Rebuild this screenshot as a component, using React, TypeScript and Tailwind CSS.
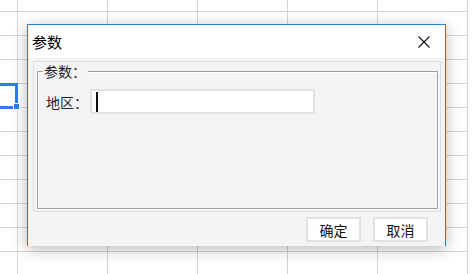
import React from 'react'

const ROWS = 12
const COLS = 6

function SheetGrid() {
  return (
    <div className="flex flex-col">
      {Array.from({ length: ROWS }).map((_, r) => (
        <div key={r} className={r === 0 ? 'flex h-[12px]' : 'flex h-[24px]'}>
          {Array.from({ length: COLS }).map((_, c) => (
            <div
              key={c}
              className={
                (c === 0 ? 'w-[18px] ' : 'w-[90px] ') +
                'shrink-0 border-r border-b border-[#d4d4d4]'
              }
            />
          ))}
        </div>
      ))}
    </div>
  )
}

export default function App() {
  return (
    <div
      className="relative w-[476px] h-[274px] overflow-hidden bg-white"
      style={{ fontFamily: '"Noto Sans CJK SC", "Noto Sans", sans-serif' }}
    >
      <SheetGrid />

      {/* selected cell */}
      <div className="absolute left-[-4px] top-[83px] w-[22px] h-[26px] border-[3px] border-[#2b7de9]" />
      <div className="absolute left-[13px] top-[103px] w-[7px] h-[7px] bg-[#2b7de9] border border-white" />

      {/* dialog */}
      <div className="absolute left-[27px] top-[24px] w-[419px] h-[222px] flex flex-col border-t border-l border-r border-[#1883d7] bg-[#f4f4f6] shadow-[0_3px_14px_rgba(0,0,0,0.28)]">
        <div className="h-[33px] bg-white flex items-center justify-between pl-[4px] pr-[15px]">
          <span className="text-[15px] leading-none text-black">参数</span>
          <svg width="12" height="12" viewBox="0 0 12 12" className="mt-[1px]">
            <path d="M0.5 0.5 L11.5 11.5 M11.5 0.5 L0.5 11.5" stroke="#111" strokeWidth="1.1" fill="none" />
          </svg>
        </div>

        <div className="flex-1 flex flex-col pl-[5px] pr-[4px] pt-[3px]">
          <div className="h-[151px] border border-[#dcdcde] pl-[3px] pr-[2px] pt-[9px] pb-[2px]">
            <div className="relative h-full border border-[#a29e94] shadow-[1px_1px_0_#fff,inset_1px_1px_0_#fff]">
              <span className="absolute left-[5px] top-[-10px] bg-[#f4f4f6] pl-[1px] pr-[2px] text-[14px] leading-[18px] text-[#222]">
                参数：
              </span>
              <div className="flex items-center pl-[8px] pt-[17px]">
                <span className="w-[44px] text-[14px] leading-none text-[#222]">地区：</span>
                <div className="w-[225px] h-[25px] bg-white border-2 border-[#e2e2e4] flex items-center pl-[4px]">
                  <div className="w-[1.5px] h-[20px] bg-[#111]" />
                </div>
              </div>
            </div>
          </div>

          <div className="flex justify-end gap-[12px] mt-[5px] pr-[13px]">
            <button className="w-[55px] h-[25px] bg-white border-2 border-[#e2e2e4] text-[14px] leading-none text-[#111]">
              确定
            </button>
            <button className="w-[55px] h-[25px] bg-white border-2 border-[#e2e2e4] text-[14px] leading-none text-[#111]">
              取消
            </button>
          </div>
        </div>
      </div>
    </div>
  )
}
